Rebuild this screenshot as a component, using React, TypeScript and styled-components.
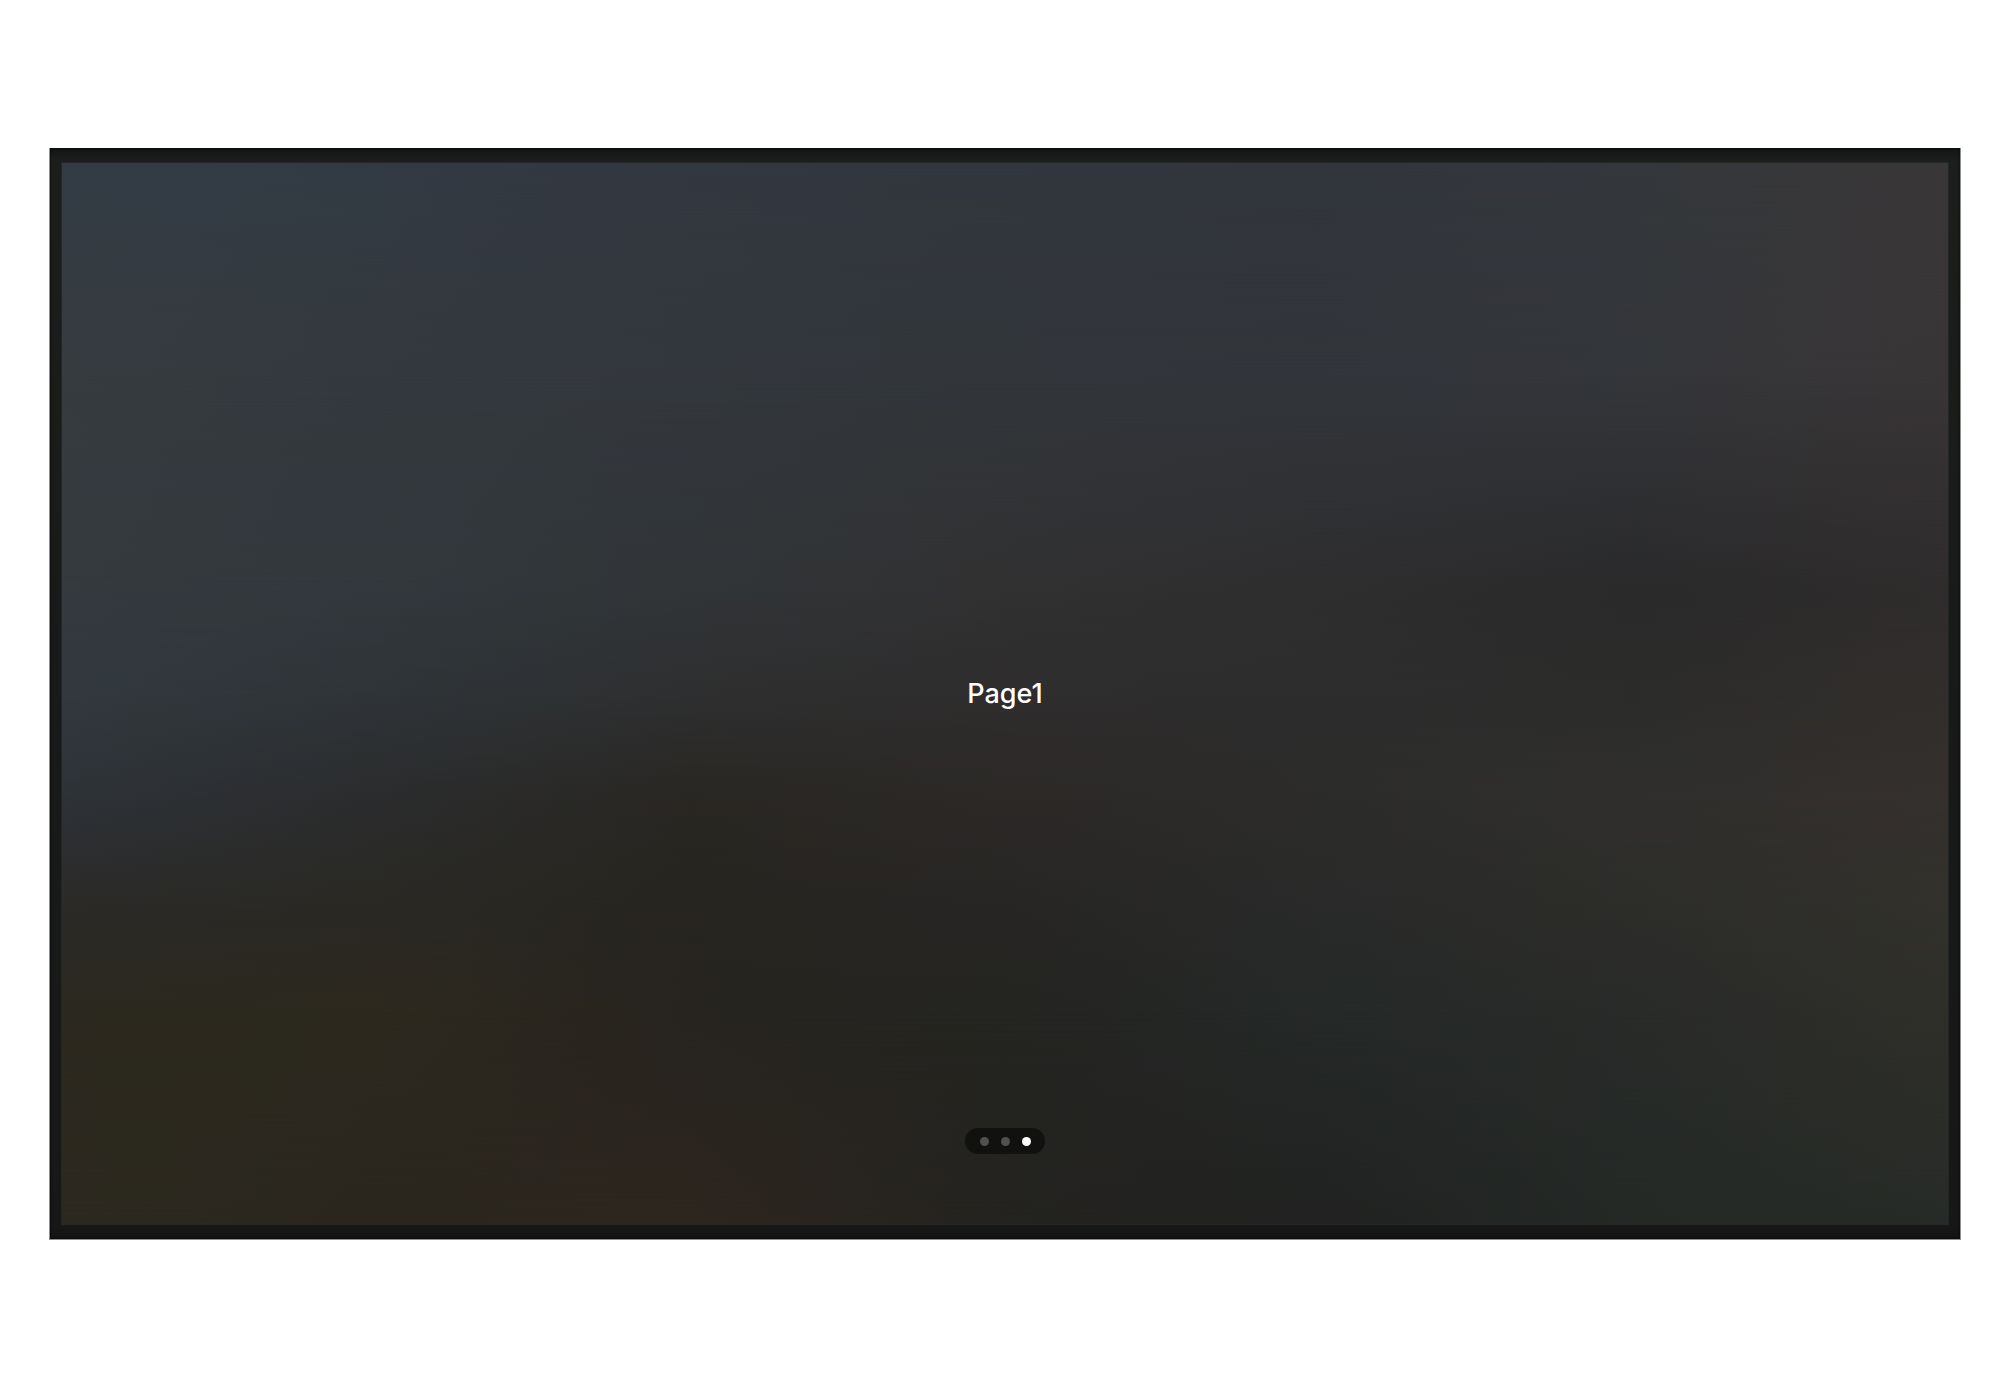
import React, { useState } from "react";
import styled, { createGlobalStyle } from "styled-components";

const GlobalStyle = createGlobalStyle`
  * {
    box-sizing: border-box;
  }
  body {
    margin: 0;
    background: #ffffff;
    font-family: Inter, Roboto, "Liberation Sans", sans-serif;
  }
`;

const Page = styled.main`
  display: flex;
  min-height: 100vh;
  padding: 148px 49px 146px;
`;

const Bezel = styled.section`
  flex: 1;
  display: flex;
  padding: 14px 11px;
  border: 1px solid #8d8f8f;
  border-top: 0;
  background: linear-gradient(#121413, #1c1e1c 12px, #181a19 50%, #171717 calc(100% - 12px), #131313);
  box-shadow: inset 0 0 3px #050505;
`;

const Screen = styled.div`
  flex: 1;
  display: grid;
  grid-template: 1fr / 1fr;
  border: 1px solid #242726;
`;

/* Each band fades in over the one above it, so the wallpaper blends both ways. */
const Band = styled.div<{ $colors: string[]; $from: number; $to: number }>`
  grid-area: 1 / 1;
  background: linear-gradient(to right, ${(p) => p.$colors.join(", ")});
  mask-image: ${(p) =>
    p.$to === 0 ? "none" : `linear-gradient(transparent ${p.$from}%, #000 ${p.$to}%)`};
`;

const Content = styled.div`
  grid-area: 1 / 1;
  z-index: 1;
  display: grid;
  grid-template-rows: 1fr auto 1fr;
  justify-items: center;
`;

const Title = styled.h1`
  grid-row: 2;
  margin: 0;
  color: #ffffff;
  font-size: 27px;
  font-weight: 500;
  line-height: 32px;
`;

const Pager = styled.nav`
  grid-row: 3;
  align-self: end;
  display: flex;
  align-items: center;
  justify-content: center;
  gap: 12px;
  width: 80px;
  height: 26px;
  margin-bottom: 70px;
  border-radius: 13px;
  background: #11110f;
`;

const Dot = styled.button<{ $active: boolean }>`
  width: 9px;
  height: 9px;
  padding: 0;
  border: 0;
  border-radius: 50%;
  background: ${(p) => (p.$active ? "#ffffff" : "#50504e")};
  cursor: pointer;
`;

const bands = [
  { at: 0, colors: ["#333c46", "#323b44", "#333740", "#32363e", "#32363c", "#34373b", "#3a3738"] },
  { at: 20, colors: ["#363b3e", "#34393e", "#33373c", "#32363a", "#32353a", "#34363a", "#393536"] },
  { at: 40, colors: ["#343a3e", "#32383c", "#313538", "#313132", "#2e2e2f", "#2a2a2b", "#2f2c2c"] },
  { at: 50, colors: ["#32393e", "#2f3438", "#2e2f30", "#2f2d2d", "#2d2d2d", "#2c2c2b", "#322e2c"] },
  { at: 60, colors: ["#2e3237", "#2b2c2d", "#292723", "#2c2927", "#2c2c2b", "#302f2d", "#34302d"] },
  { at: 70, colors: ["#2b2a28", "#2a2924", "#272520", "#272625", "#292a29", "#2d2d2a", "#32312c"] },
  { at: 80, colors: ["#2c291f", "#2d291e", "#27241f", "#242421", "#252928", "#292b29", "#2f2f2a"] },
  { at: 100, colors: ["#2c291f", "#2a261e", "#2d261e", "#242320", "#212221", "#242926", "#272b27"] },
];

const pages = ["First page", "Second page", "Third page"];

export default function App() {
  const [active, setActive] = useState(2);

  return (
    <>
      <GlobalStyle />
      <Page>
        <Bezel>
          <Screen>
            {bands.map((band, i) => (
              <Band
                key={band.at}
                $colors={band.colors}
                $from={i === 0 ? 0 : bands[i - 1].at}
                $to={band.at}
              />
            ))}
            <Content>
              <Title>Page1</Title>
              <Pager aria-label="Pages">
                {pages.map((name, i) => (
                  <Dot
                    key={name}
                    type="button"
                    aria-label={name}
                    aria-current={i === active ? "page" : undefined}
                    $active={i === active}
                    onClick={() => setActive(i)}
                  />
                ))}
              </Pager>
            </Content>
          </Screen>
        </Bezel>
      </Page>
    </>
  );
}
